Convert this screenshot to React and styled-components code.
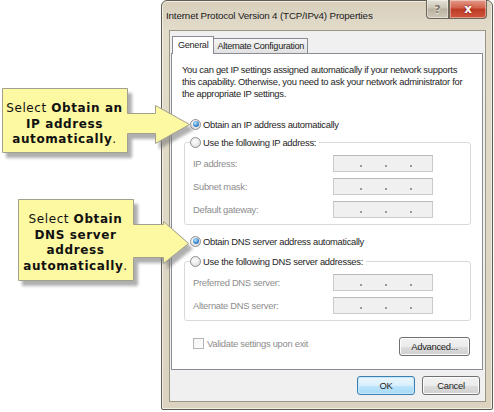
import styled, { createGlobalStyle } from "styled-components";

const GlobalStyle = createGlobalStyle`
  html, body {
    margin: 0;
    padding: 0;
    background: #fff;
  }
  body {
    font-family: "Liberation Sans", Arial, sans-serif;
    font-size: 9.4px;
    letter-spacing: -0.28px;
    color: #1e1e1e;
  }
`;

const Stage = styled.div`
  position: relative;
  width: 494px;
  height: 412px;
  overflow: hidden;
  display: flex;
  padding-left: 161px;
  box-sizing: border-box;
  background: #fff;
`;

const Dialog = styled.div`
  width: 332px;
  height: 410px;
  box-sizing: border-box;
  border: 1px solid #5f5b52;
  border-radius: 6px 6px 2px 2px;
  background: linear-gradient(#d7cfbb, #e3dccb 30px, #dbd3c0);
  box-shadow: inset 0 0 0 1px #f2eee3;
  display: flex;
  flex-direction: column;
  padding: 0 6px 7px 7px;
`;

const TitleBar = styled.div`
  height: 29px;
  display: flex;
  align-items: flex-start;
  margin-left: -3px;
`;

const TitleText = styled.div`
  align-self: center;
  font-size: 9.8px;
  letter-spacing: -0.15px;
  color: #1a1a1a;
  white-space: nowrap;
`;

const Captions = styled.div`
  margin-left: auto;
  margin-right: -1px;
  margin-top: -1px;
  display: flex;
`;

const CaptionButton = styled.div`
  width: ${(p) => p.$w}px;
  height: 19px;
  box-sizing: border-box;
  border: 1px solid #6d6659;
  border-top: none;
  border-radius: ${(p) => (p.$close ? "0 0 4px 0" : "0 0 0 4px")};
  background: ${(p) =>
    p.$close
      ? "linear-gradient(#e49a8a, #d2604a 45%, #be3a24 50%, #cf573d)"
      : "linear-gradient(#e6e2d8, #cbc5b6 45%, #b8b1a1 50%, #cfc9ba)"};
  box-shadow: inset 0 0 0 1px rgba(255, 255, 255, 0.4);
  display: flex;
  align-items: center;
  justify-content: center;
  font-family: "DejaVu Sans", sans-serif;
  font-weight: 700;
  letter-spacing: 0;
  font-size: ${(p) => (p.$close ? "12px" : "11px")};
  color: ${(p) => (p.$close ? "#fff" : "#7d7668")};
  text-shadow: ${(p) => (p.$close ? "0 0 2px #5e150c" : "0 1px 0 #f4f1ea")};
`;

const Client = styled.div`
  flex: 1;
  background: #f0f0f0;
  border: 1px solid #9b9584;
  padding: 5px 2px 5px 1px;
  display: flex;
  flex-direction: column;
`;

const Tabs = styled.div`
  display: flex;
  align-items: flex-end;
  padding-left: 1px;
  margin-bottom: -1px;
  position: relative;
  z-index: 1;
`;

const Tab = styled.div`
  box-sizing: border-box;
  height: ${(p) => (p.$active ? 18 : 16)}px;
  border: 1px solid #898c95;
  border-bottom: ${(p) => (p.$active ? "none" : "1px solid #898c95")};
  border-left: ${(p) => (p.$first ? "1px solid #898c95" : "none")};
  background: ${(p) => (p.$active ? "#fff" : "linear-gradient(#f5f5f5, #e1e1e1)")};
  padding: 0 ${(p) => (p.$active ? 5 : 3)}px;
  font-size: 9.1px;
  letter-spacing: -0.28px;
  line-height: ${(p) => (p.$active ? 17 : 14)}px;
  color: #1e1e1e;
  white-space: nowrap;
`;

const Panel = styled.div`
  height: 317px;
  box-sizing: border-box;
  background: #fff;
  border: 1px solid #898c95;
  padding: 10px 11px 0 10px;
  display: flex;
  flex-direction: column;
`;

const Intro = styled.p`
  margin: 0;
  line-height: 12px;
  color: #1e1e1e;
`;

const RadioRow = styled.label`
  display: flex;
  align-items: center;
  gap: 2px;
  height: 14px;
  margin-top: ${(p) => p.$top}px;
  margin-left: 8px;
  color: #1e1e1e;
  white-space: nowrap;
`;

const Radio = styled.span`
  width: 11px;
  height: 11px;
  box-sizing: border-box;
  border-radius: 50%;
  border: 1px solid #8c8e91;
  background: radial-gradient(circle at 40% 35%, #ffffff, #e3e3e3 70%, #cfcfcf);
  display: flex;
  align-items: center;
  justify-content: center;

  &::after {
    content: "";
    display: ${(p) => (p.$checked ? "block" : "none")};
    width: 6px;
    height: 6px;
    border-radius: 50%;
    background: radial-gradient(circle at 40% 35%, #c4eafc, #3a8ad0 55%, #1a4f8c);
  }
`;

const Group = styled.fieldset`
  margin: ${(p) => p.$top}px 0 0 2px;
  width: 287px;
  box-sizing: border-box;
  border: 1px solid #d5dade;
  border-radius: 3px;
  padding: 6px 0 6px 5px;
  display: flex;
  flex-direction: column;
  gap: 6px;
`;

const Legend = styled.legend`
  padding: 0 3px 0 0;
  display: flex;
  align-items: center;
  gap: 2px;
  height: 14px;
  color: #1e1e1e;
  white-space: nowrap;
`;

const FieldRow = styled.div`
  display: flex;
  align-items: center;
  padding-left: 3px;
  height: 17px;
`;

const FieldLabel = styled.span`
  width: 140px;
  color: #8d8d8d;
`;

const IpField = styled.div`
  width: 100px;
  height: 17px;
  box-sizing: border-box;
  border: 1px solid #cacaca;
  border-top-color: #b9b9b9;
  background: #f0f0f0;
  display: flex;
  align-items: flex-end;
  gap: 23px;
  padding: 0 0 4px 26px;
`;

const Dot = styled.span`
  width: 2px;
  height: 2px;
  background: #9a9a9a;
`;

const Footer = styled.div`
  margin-top: 16px;
  display: flex;
  justify-content: space-between;
  align-items: flex-start;
  padding: 0 1px 0 11px;
`;

const CheckRow = styled.label`
  display: flex;
  align-items: center;
  gap: 3px;
  height: 12px;
  color: #8d8d8d;
`;

const Checkbox = styled.span`
  width: 11px;
  height: 11px;
  box-sizing: border-box;
  border: 1px solid #b4b4b4;
  background: linear-gradient(135deg, #f4f4f4, #fdfdfd);
`;

const Button = styled.div`
  width: ${(p) => p.$w}px;
  height: 19px;
  box-sizing: border-box;
  border: 1px solid ${(p) => (p.$default ? "#3c7fb1" : "#707070")};
  border-radius: 3px;
  background: ${(p) =>
    p.$default
      ? "linear-gradient(#eaf6fd, #d9f0fc 50%, #bee6fd 51%, #a7d9f5)"
      : "linear-gradient(#f2f2f2, #ebebeb 50%, #dddddd 51%, #cfcfcf)"};
  box-shadow: inset 0 0 0 1px ${(p) => (p.$default ? "#c7e7fa" : "#fcfcfc")};
  display: flex;
  align-items: center;
  justify-content: center;
  color: #1e1e1e;
`;

const ButtonRow = styled.div`
  margin-top: 6px;
  display: flex;
  justify-content: flex-end;
  gap: 7px;
  padding-right: 3px;
`;

const Callout = styled.div`
  position: absolute;
  left: ${(p) => p.$x}px;
  top: ${(p) => p.$y}px;
  z-index: 5;
`;

const CalloutShape = styled.svg`
  position: absolute;
  left: 0;
  top: 0;
  overflow: visible;
`;

const CalloutText = styled.div`
  position: relative;
  box-sizing: border-box;
  width: ${(p) => p.$w}px;
  height: ${(p) => p.$h}px;
  padding-top: 13px;
  text-align: center;
  font-family: "DejaVu Sans", Verdana, sans-serif;
  font-size: 12px;
  line-height: 15.5px;
  letter-spacing: 0.6px;
  color: #111;

  b {
    font-weight: 700;
  }
`;

const calloutFill = "#fdf8a2";
const calloutStroke = "#a3a08e";

const Bubble = ({ x, y, w, h, points, children }) => (
  <Callout $x={x} $y={y}>
    <CalloutShape width="200" height="100">
      <defs>
        <filter id={`sh${y}`} x="-10%" y="-10%" width="130%" height="140%">
          <feDropShadow dx="4" dy="5" stdDeviation="1.8" floodColor="#7a7a7a" floodOpacity="0.6" />
        </filter>
      </defs>
      <polygon
        points={points}
        fill={calloutFill}
        stroke={calloutStroke}
        strokeWidth="1"
        filter={`url(#sh${y})`}
        transform="translate(0.5 0.5)"
      />
    </CalloutShape>
    <CalloutText $w={w} $h={h}>
      {children}
    </CalloutText>
  </Callout>
);

const IpBox = () => (
  <IpField>
    <Dot />
    <Dot />
    <Dot />
  </IpField>
);

const Field = ({ label }) => (
  <FieldRow>
    <FieldLabel>{label}</FieldLabel>
    <IpBox />
  </FieldRow>
);

export default function App() {
  return (
    <>
      <GlobalStyle />
      <Stage>
        <Dialog>
          <TitleBar>
            <TitleText>Internet Protocol Version 4 (TCP/IPv4) Properties</TitleText>
            <Captions>
              <CaptionButton $w={23}>?</CaptionButton>
              <CaptionButton $w={38} $close>
                x
              </CaptionButton>
            </Captions>
          </TitleBar>

          <Client>
            <Tabs>
              <Tab $active $first>
                General
              </Tab>
              <Tab>Alternate Configuration</Tab>
            </Tabs>

            <Panel>
              <Intro>
                You can get IP settings assigned automatically if your network supports
                this capability. Otherwise, you need to ask your network administrator
                for the appropriate IP settings.
              </Intro>

              <RadioRow $top={17}>
                <Radio $checked />
                Obtain an IP address automatically
              </RadioRow>

              <Group $top={4}>
                <Legend>
                  <Radio />
                  Use the following IP address:
                </Legend>
                <Field label="IP address:" />
                <Field label="Subnet mask:" />
                <Field label="Default gateway:" />
              </Group>

              <RadioRow $top={9}>
                <Radio $checked />
                Obtain DNS server address automatically
              </RadioRow>

              <Group $top={6}>
                <Legend>
                  <Radio />
                  Use the following DNS server addresses:
                </Legend>
                <Field label="Preferred DNS server:" />
                <Field label="Alternate DNS server:" />
              </Group>

              <Footer>
                <CheckRow>
                  <Checkbox />
                  Validate settings upon exit
                </CheckRow>
                <Button $w={71}>Advanced...</Button>
              </Footer>
            </Panel>

            <ButtonRow>
              <Button $w={58} $default>
                OK
              </Button>
              <Button $w={58}>Cancel</Button>
            </ButtonRow>
          </Client>
        </Dialog>

        <Bubble
          x={2}
          y={88}
          w={125}
          h={64}
          points="0,0 125,0 125,25 153,25 153,17 187,36 153,55 153,45 125,45 125,64 0,64"
        >
          Select <b>Obtain an</b>
          <br />
          <b>IP address</b>
          <br />
          <b>automatically</b>.
        </Bubble>

        <Bubble
          x={18}
          y={199}
          w={115}
          h={81}
          points="0,0 115,0 115,25 145,25 145,22 170,44 145,64 145,58 115,58 115,81 0,81"
        >
          Select <b>Obtain</b>
          <br />
          <b>DNS server</b>
          <br />
          <b>address</b>
          <br />
          <b>automatically</b>.
        </Bubble>
      </Stage>
    </>
  );
}
